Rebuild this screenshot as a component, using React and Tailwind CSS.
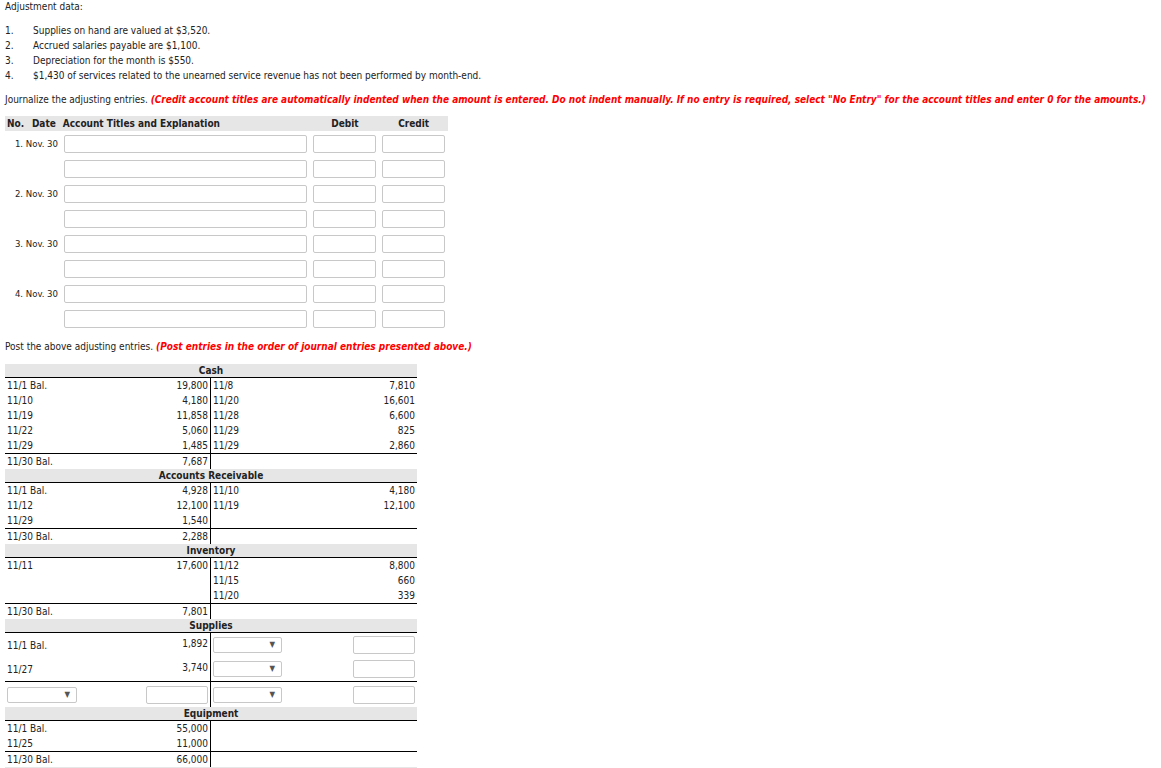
import React from "react";

const FONT = "font-['DejaVu_Sans_Condensed','Liberation_Sans',sans-serif]";

function Input({ w }) {
  return <div className={`${w} h-[18px] border border-[#c8c8c8] rounded-[2px] bg-white`} />;
}

function Select({ w }) {
  return (
    <div className={`${w} h-[16px] border border-[#c8c8c8] rounded-[2px] bg-white flex items-center justify-end pr-[6px]`}>
      <span className="text-[8px] text-[#555] leading-none">▼</span>
    </div>
  );
}

function TRow({ label, amount }) {
  return (
    <div className="h-[15px] flex items-center justify-between px-[2px]">
      <span>{label}</span>
      <span>{amount}</span>
    </div>
  );
}

function TAccount({ title, left, right, bal }) {
  const n = Math.max(left.length, right.length);
  const rows = Array.from({ length: n });
  return (
    <div className="w-[412px]">
      <div className="h-[14px] bg-[#e6e6e6] border-b border-black text-center font-bold leading-[13px]">{title}</div>
      <div className="flex">
        <div className="w-[206px] border-r border-black">
          {rows.map((_, i) => (
            <TRow key={i} label={left[i]?.[0] ?? ""} amount={left[i]?.[1] ?? ""} />
          ))}
        </div>
        <div className="flex-1">
          {rows.map((_, i) => (
            <TRow key={i} label={right[i]?.[0] ?? ""} amount={right[i]?.[1] ?? ""} />
          ))}
        </div>
      </div>
      <div className="flex border-t border-black">
        <div className="w-[206px] border-r border-black">
          <TRow label={bal[0]} amount={bal[1]} />
        </div>
        <div className="flex-1" />
      </div>
    </div>
  );
}

export default function App() {
  const journal = [1, 2, 3, 4];
  return (
    <div className={`${FONT} text-[10px] text-[#222] bg-white w-[1161px] h-[768px] overflow-hidden px-[5px]`}>
      <div className="h-[13px] leading-[13px]">Adjustment data:</div>
      <div className="mt-[10px]">
        {[
          "Supplies on hand are valued at $3,520.",
          "Accrued salaries payable are $1,100.",
          "Depreciation for the month is $550.",
          "$1,430 of services related to the unearned service revenue has not been performed by month-end.",
        ].map((t, i) => (
          <div key={i} className="flex h-[15px] items-center">
            <span className="w-[28px]">{i + 1}.</span>
            <span>{t}</span>
          </div>
        ))}
      </div>
      <div className="mt-[9px] h-[15px] leading-[15px] whitespace-nowrap">
        Journalize the adjusting entries.{" "}
        <span className="text-[#f00] font-bold italic">
          (Credit account titles are automatically indented when the amount is entered. Do not indent manually. If no entry is required, select "No Entry" for the account titles and enter 0 for the amounts.)
        </span>
      </div>
      <div className="mt-[9px] w-[443px] h-[15px] bg-[#e6e6e6] flex items-center font-bold">
        <span className="pl-[2px] w-[27px]">No.</span>
        <span className="w-[31px]">Date</span>
        <span className="w-[249px]">Account Titles and Explanation</span>
        <span className="w-[69px] text-center">Debit</span>
        <span className="w-[69px] text-center">Credit</span>
      </div>
      <div className="mt-[4px] flex flex-col gap-[7px]">
        {journal.map((n) => (
          <React.Fragment key={n}>
            <div className="flex items-center gap-[6px]">
              <span className="w-[53px] text-right text-[9.5px]">{n}. Nov. 30</span>
              <Input w="w-[243px]" />
              <Input w="w-[63px]" />
              <Input w="w-[63px]" />
            </div>
            <div className="flex items-center gap-[6px]">
              <span className="w-[53px]" />
              <Input w="w-[243px]" />
              <Input w="w-[63px]" />
              <Input w="w-[63px]" />
            </div>
          </React.Fragment>
        ))}
      </div>
      <div className="mt-[11px] h-[15px] leading-[15px]">
        Post the above adjusting entries.{" "}
        <span className="text-[#f00] font-bold italic">(Post entries in the order of journal entries presented above.)</span>
      </div>
      <div className="mt-[10px]">
        <TAccount
          title="Cash"
          left={[["11/1 Bal.", "19,800"], ["11/10", "4,180"], ["11/19", "11,858"], ["11/22", "5,060"], ["11/29", "1,485"]]}
          right={[["11/8", "7,810"], ["11/20", "16,601"], ["11/28", "6,600"], ["11/29", "825"], ["11/29", "2,860"]]}
          bal={["11/30 Bal.", "7,687"]}
        />
        <TAccount
          title="Accounts Receivable"
          left={[["11/1 Bal.", "4,928"], ["11/12", "12,100"], ["11/29", "1,540"]]}
          right={[["11/10", "4,180"], ["11/19", "12,100"]]}
          bal={["11/30 Bal.", "2,288"]}
        />
        <TAccount
          title="Inventory"
          left={[["11/11", "17,600"]]}
          right={[["11/12", "8,800"], ["11/15", "660"], ["11/20", "339"]]}
          bal={["11/30 Bal.", "7,801"]}
        />
        <div className="w-[412px]">
          <div className="h-[14px] bg-[#e6e6e6] border-b border-black text-center font-bold leading-[13px]">Supplies</div>
          <div className="flex">
            <div className="w-[206px] border-r border-black">
              {[["11/1 Bal.", "1,892"], ["11/27", "3,740"]].map(([l, a]) => (
                <div key={l} className="h-[24px] flex items-center justify-between px-[2px]">
                  <span>{l}</span>
                  <span className="-mt-[3px]">{a}</span>
                </div>
              ))}
            </div>
            <div className="flex-1">
              {[0, 1].map((i) => (
                <div key={i} className="h-[24px] flex items-center justify-between px-[2px]">
                  <Select w="w-[69px]" />
                  <Input w="w-[62px]" />
                </div>
              ))}
            </div>
          </div>
          <div className="flex border-t border-black">
            <div className="w-[206px] border-r border-black h-[25px] flex items-center justify-between px-[2px]">
              <Select w="w-[70px]" />
              <Input w="w-[62px]" />
            </div>
            <div className="flex-1 h-[25px] flex items-center justify-between px-[2px]">
              <Select w="w-[69px]" />
              <Input w="w-[62px]" />
            </div>
          </div>
        </div>
        <TAccount
          title="Equipment"
          left={[["11/1 Bal.", "55,000"], ["11/25", "11,000"]]}
          right={[]}
          bal={["11/30 Bal.", "66,000"]}
        />
        <div className="w-[412px] h-[3px] bg-[#e6e6e6]" />
      </div>
    </div>
  );
}
